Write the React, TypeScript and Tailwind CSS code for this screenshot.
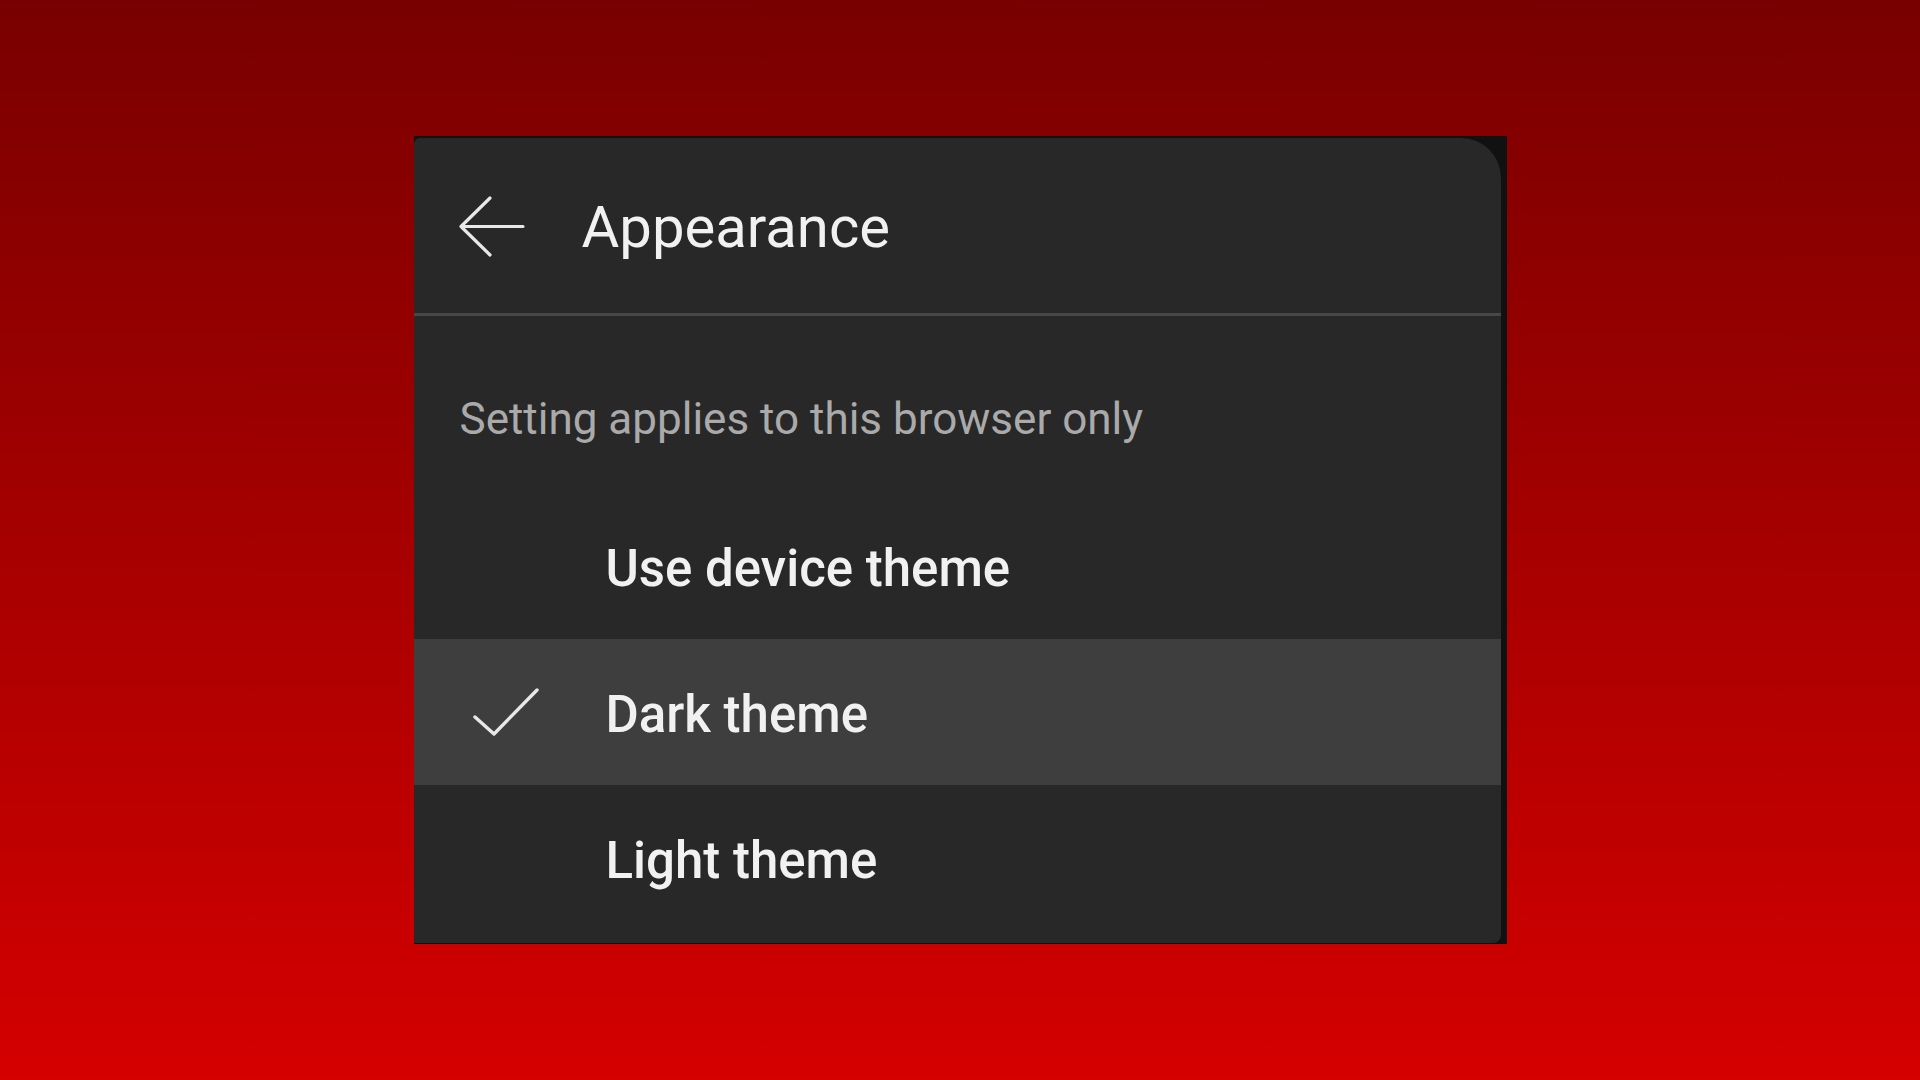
import React from "react";

function BackArrow() {
  return (
    <svg width="75" height="70" viewBox="0 0 75 70" fill="none">
      <path d="M68 35.5H6M35 7L6 35.5L35 64" stroke="#e8e8e8" strokeWidth="3.2" strokeLinecap="round" strokeLinejoin="round" />
    </svg>
  );
}

function Check() {
  return (
    <svg width="80" height="60" viewBox="0 0 80 60" fill="none">
      <path d="M5 35L24 52L67 8" stroke="#e8e8e8" strokeWidth="3.4" strokeLinecap="round" strokeLinejoin="round" />
    </svg>
  );
}

function Row({ label, checked }: { label: string; checked?: boolean }) {
  return (
    <div className={`flex h-[146px] items-center ${checked ? "bg-[#3e3e3e]" : ""}`}>
      <div className="flex w-[192px] items-center pl-[56px]">{checked ? <Check /> : null}</div>
      <span className="pt-[4px] text-[51px] font-medium leading-none text-[#f1f1f1]">{label}</span>
    </div>
  );
}

export default function App() {
  return (
    <div
      className="flex h-screen w-full items-center justify-center bg-gradient-to-b from-[#790000] to-[#d50000]"
      style={{ fontFamily: "Roboto, 'Noto Sans', Arial, sans-serif" }}
    >
      <div className="flex h-[808px] w-[1093px] flex-col bg-[#111111] pt-[2px] pr-[6px] pb-[1px]">
        <div className="flex flex-1 flex-col rounded-tl-[6px] rounded-tr-[40px] rounded-br-[8px] bg-[#282828]">
          <div className="flex h-[175px] items-center pl-[41px]">
            <BackArrow />
            <span className="ml-[52px] pt-[2px] text-[58px] leading-none text-[#f1f1f1]">Appearance</span>
          </div>
          <div className="h-[3px] bg-[#474747]" />
          <div className="h-[177px] pt-[81px] pl-[46px]">
            <span className="text-[44px] leading-none text-[#aaaaaa]">Setting applies to this browser only</span>
          </div>
          <Row label="Use device theme" />
          <Row label="Dark theme" checked />
          <Row label="Light theme" />
        </div>
      </div>
    </div>
  );
}
